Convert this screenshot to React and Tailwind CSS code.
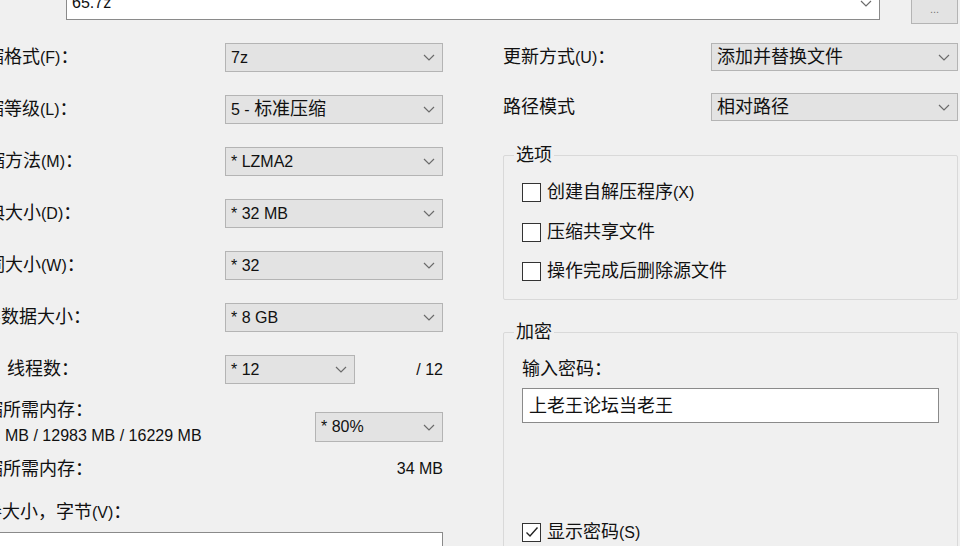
const CJK = /([\u2e80-\u9fff\uff00-\uffef]+)/;

// CJK runs render a bit larger than the Latin text around them
function T({ children }) {
  return children.split(CJK).map((part, i) =>
    i % 2 ? (
      <span key={i} className="text-[18px]">
        {part}
      </span>
    ) : (
      part
    )
  );
}

function Chevron() {
  return (
    <svg width="12" height="7" viewBox="0 0 12 7" className="shrink-0">
      <path d="M1 1l5 5 5-5" fill="none" stroke="#6b6b6b" strokeWidth="1.2" />
    </svg>
  );
}

function Select({ value, className = "" }) {
  return (
    <div
      className={`flex items-center justify-between bg-[#e3e3e3] border border-[#b4b4b4] pl-[5px] pr-[7px] ${className}`}
    >
      <span className="whitespace-nowrap">
        <T>{value}</T>
      </span>
      <Chevron />
    </div>
  );
}

function Label({ hidden, shown, shift }) {
  return (
    <span className={`whitespace-nowrap shrink-0 ${shift}`}>
      <T>{hidden + shown}</T>
    </span>
  );
}

function Check({ label, checked = false, className = "" }) {
  return (
    <div className={`flex items-center h-[24px] ${className}`}>
      <span className="w-[19px] h-[19px] border-[1.5px] border-[#333] bg-white flex items-center justify-center">
        {checked && (
          <svg width="14" height="12" viewBox="0 0 14 12">
            <path d="M1.5 6.5l3.5 3.5 7.5-8.5" fill="none" stroke="#222" strokeWidth="1.4" />
          </svg>
        )}
      </span>
      <span className="ml-[6px] whitespace-nowrap">
        <T>{label}</T>
      </span>
    </div>
  );
}

const leftRows = [
  { hidden: "压缩", shown: "格式(F)：", shift: "ml-[-32px]", value: "7z" },
  { hidden: "压缩", shown: "等级(L)：", shift: "ml-[-32px]", value: "5 - 标准压缩" },
  { hidden: "压缩", shown: "方法(M)：", shift: "ml-[-31px]", value: "* LZMA2" },
  { hidden: "字典", shown: "大小(D)：", shift: "ml-[-31px]", value: "* 32 MB" },
  { hidden: "单词", shown: "大小(W)：", shift: "ml-[-31px]", value: "* 32" },
  { hidden: "固实", shown: "数据大小：", shift: "ml-[-35px]", value: "* 8 GB" },
];

export default function App() {
  return (
    <div
      className="w-[960px] h-[546px] overflow-hidden bg-[#f0f0f0] text-[16px] text-[#111] leading-[24px]"
      style={{ fontFamily: '"Liberation Sans", "Noto Sans CJK SC", sans-serif' }}
    >
      {/* archive path */}
      <div className="flex h-[24px]">
        <div className="ml-[66px] mt-[-14px] w-[814px] h-[34px] bg-white border border-[#8a8a8a] flex items-center justify-between pl-[5px] pr-[7px]">
          <span>65.7z</span>
          <Chevron />
        </div>
        <div className="ml-[31px] mt-[-6px] w-[47px] h-[30px] bg-[#e3e3e3] border border-[#b4b4b4] flex items-center justify-center text-[11px] text-[#777] leading-none">
          ...
        </div>
      </div>

      <div className="flex">
        {/* left column */}
        <div className="w-[443px] shrink-0 pt-[19px] flex flex-col">
          <div className="flex flex-col gap-[23px]">
            {leftRows.map((r) => (
              <div key={r.shown} className="flex items-center justify-between h-[29px]">
                <Label hidden={r.hidden} shown={r.shown} shift={r.shift} />
                <Select value={r.value} className="w-[218px] h-[29px]" />
              </div>
            ))}
            <div className="flex items-center h-[29px]">
              <span className="ml-[7px] w-[218px] whitespace-nowrap">
                <T>线程数：</T>
              </span>
              <Select value="* 12" className="w-[130px] h-[29px]" />
              <span className="ml-auto">/ 12</span>
            </div>
          </div>

          <div className="flex justify-between mt-[13px]">
            <div className="flex flex-col">
              <div className="h-[26px] flex items-center">
                <Label hidden="压缩" shown="所需内存：" shift="ml-[-33px]" />
              </div>
              <div className="h-[26px] flex items-center pl-[5px]">MB / 12983 MB / 16229 MB</div>
            </div>
            <Select value="* 80%" className="mt-[15px] w-[128px] h-[30px]" />
          </div>

          <div className="flex items-center justify-between h-[26px] mt-[7px]">
            <Label hidden="解压缩" shown="所需内存：" shift="ml-[-51px]" />
            <span>34 MB</span>
          </div>

          <div className="flex items-center h-[26px] mt-[17px]">
            <Label hidden="分卷" shown="大小，字节(V)：" shift="ml-[-34px]" />
          </div>

          <div className="ml-[-2px] mt-[7px] h-[30px] bg-white border border-[#8a8a8a]" />
        </div>

        {/* right column */}
        <div className="ml-[60px] w-[455px] shrink-0 pt-[19px] flex flex-col">
          <div className="flex items-center justify-between h-[28px]">
            <span className="whitespace-nowrap">
              <T>更新方式(U)：</T>
            </span>
            <Select value="添加并替换文件" className="w-[247px] h-[28px]" />
          </div>
          <div className="flex items-center justify-between h-[28px] mt-[22px]">
            <span className="whitespace-nowrap">
              <T>路径模式</T>
            </span>
            <Select value="相对路径" className="w-[247px] h-[28px]" />
          </div>

          <fieldset className="mt-[22px] h-[157px] border border-[#d9d9d9] rounded-[2px] pl-[18px]">
            <legend className="ml-[-8px] px-[2px]">
              <T>选项</T>
            </legend>
            <Check label="创建自解压程序(X)" className="mt-[12px]" />
            <Check label="压缩共享文件" className="mt-[16px]" />
            <Check label="操作完成后删除源文件" className="mt-[15px]" />
          </fieldset>

          <fieldset className="mt-[20px] h-[260px] border border-[#d9d9d9] rounded-[2px] pl-[18px]">
            <legend className="ml-[-8px] px-[2px]">
              <T>加密</T>
            </legend>
            <div className="mt-[12px] h-[24px] flex items-center">
              <T>输入密码：</T>
            </div>
            <div className="mt-[7px] w-[417px] h-[35px] bg-white border border-[#8a8a8a] flex items-center pl-[6px]">
              <T>上老王论坛当老王</T>
            </div>
            <Check label="显示密码(S)" checked className="mt-[97px]" />
          </fieldset>
        </div>
      </div>
    </div>
  );
}
